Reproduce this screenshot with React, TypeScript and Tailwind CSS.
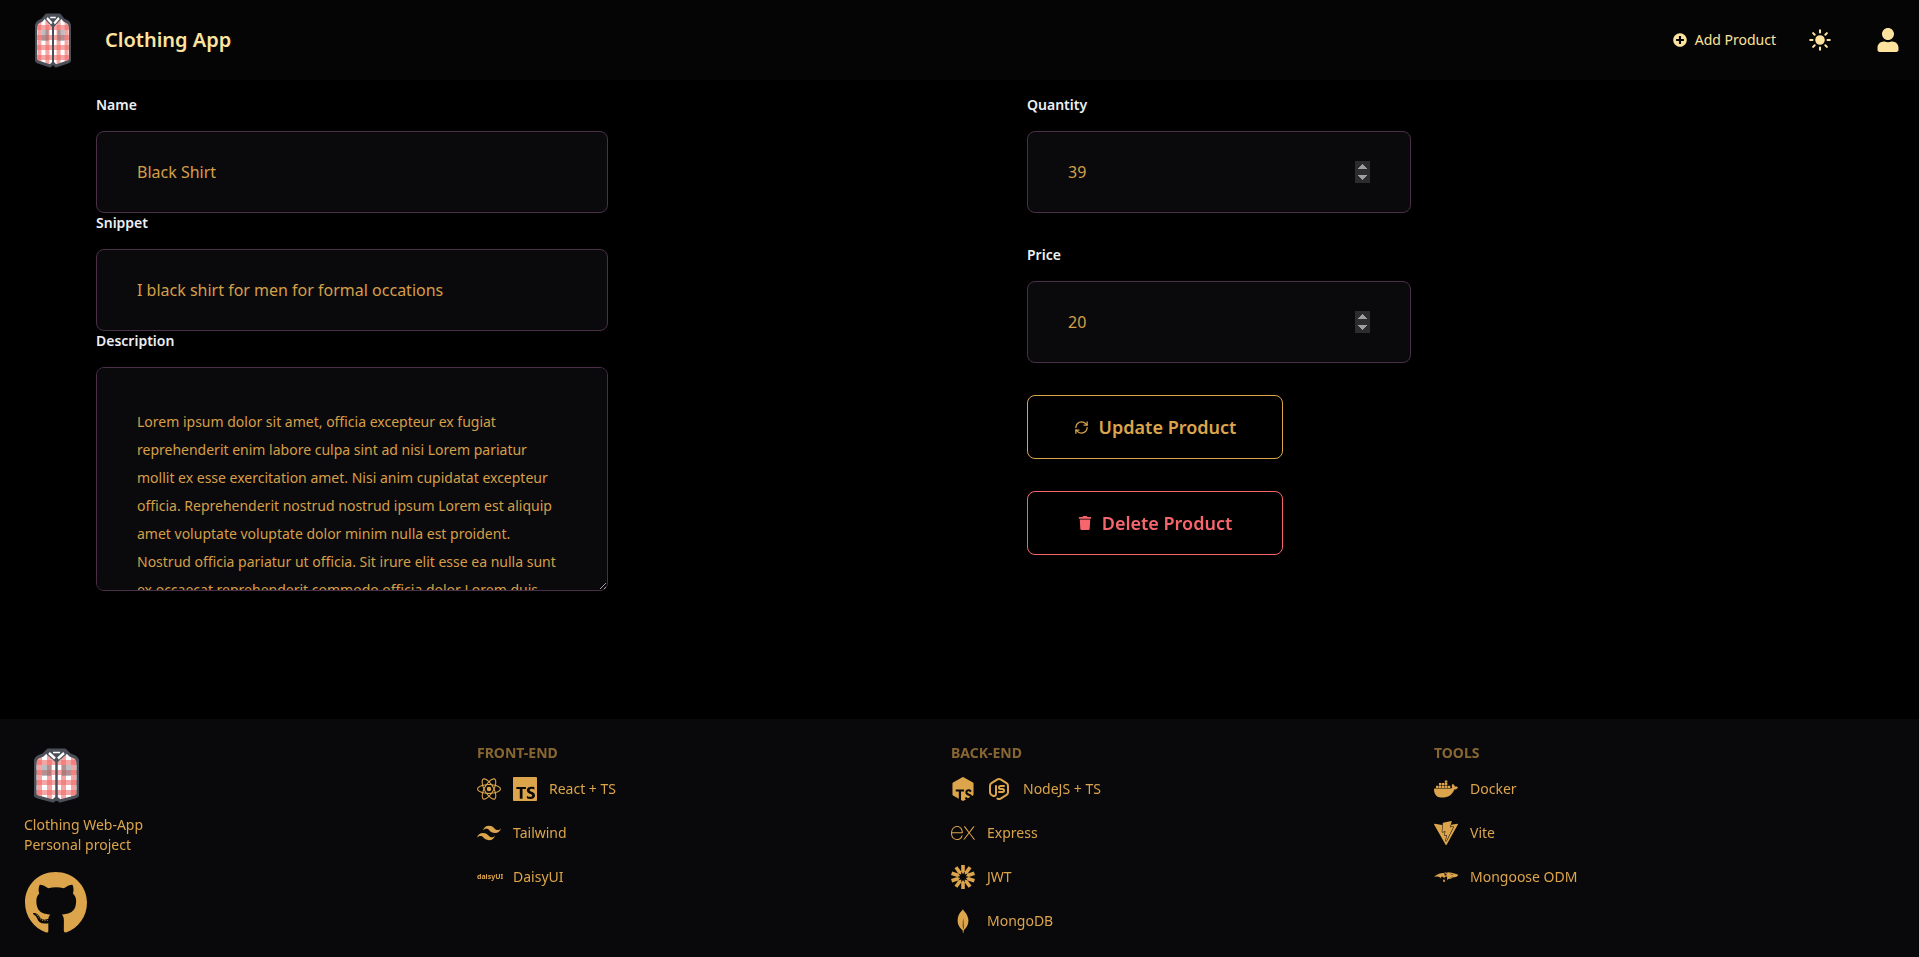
import type { ReactNode } from 'react';
import { FaGithub, FaPlusCircle, FaTrash, FaUser } from 'react-icons/fa';
import { IoSunny } from 'react-icons/io5';
import { LuRefreshCw } from 'react-icons/lu';
import { TbBrandNodejs } from 'react-icons/tb';
import {
  SiDocker,
  SiExpress,
  SiJsonwebtokens,
  SiMongodb,
  SiMongoose,
  SiReact,
  SiTailwindcss,
  SiTsnode,
  SiTypescript,
  SiVite,
} from 'react-icons/si';

const description =
  'Lorem ipsum dolor sit amet, officia excepteur ex fugiat reprehenderit enim labore culpa sint ad nisi Lorem pariatur mollit ex esse exercitation amet. Nisi anim cupidatat excepteur officia. Reprehenderit nostrud nostrud ipsum Lorem est aliquip amet voluptate voluptate dolor minim nulla est proident. Nostrud officia pariatur ut officia. Sit irure elit esse ea nulla sunt ex occaecat reprehenderit commodo officia dolor Lorem duis laboris cupidatat officia voluptate. Culpa proident adipisicing id nulla nisi laboris ex in Lorem sunt duis officia eiusmod.';

const shirtOutline = 'M14 2 L31 2 L36 7 L41 9 Q44 11 44 15 L44 46 Q44 48 41 49 L26 53 L22.5 50 L19 53 L4 49 Q1 48 1 46 L1 15 Q1 11 4 9 L9 7 Z';

function ShirtLogo({ className }: { className: string }) {
  return (
    <svg viewBox="0 0 45 55" preserveAspectRatio="none" className={className}>
      <defs>
        <clipPath id="shirt-body">
          <path d={shirtOutline} />
        </clipPath>
      </defs>
      <g clipPath="url(#shirt-body)">
        <rect width="45" height="55" fill="#ffffff" />
        {[3, 13, 27, 37].map((x) => (
          <rect key={x} x={x} y="0" width="5" height="55" fill="#ef6b68" fillOpacity="0.6" />
        ))}
        {[12, 22, 32, 42].map((y) => (
          <rect key={y} x="0" y={y} width="45" height="5" fill="#ef6b68" fillOpacity="0.6" />
        ))}
        <rect x="8" y="17" width="9" height="11" fill="#6b7078" fillOpacity="0.45" />
        <rect x="28" y="17" width="9" height="11" fill="#6b7078" fillOpacity="0.45" />
      </g>
      <path d={shirtOutline} fill="none" stroke="#4b5058" strokeWidth="3" strokeLinejoin="round" />
      <path d="M22.5 10 L22.5 50" stroke="#4b5058" strokeWidth="2.5" />
      <path d="M11 5 L22.5 15 L34 5 L30 2 L15 2 Z" fill="#4b5058" />
      <path d="M15 5 L21 10.5 M30 5 L24 10.5" stroke="#ffffff" strokeWidth="2.5" />
      <path d="M19 4.5 L26 4.5" stroke="#ffffff" strokeWidth="1.5" />
    </svg>
  );
}

function Field({ label, children, className = '' }: { label: string; children: ReactNode; className?: string }) {
  return (
    <div className={className}>
      <label className="mb-4 block text-sm leading-5 font-semibold text-[#eceff4]">{label}</label>
      {children}
    </div>
  );
}

const inputClass =
  'block h-[82px] w-full rounded-lg border border-[#4a2f48] bg-[#0a0a0d] px-10 text-base text-[#d69f48] outline-none [color-scheme:dark]';
const numberClass = inputClass + ' [&::-webkit-inner-spin-button]:opacity-100';

function FooterRow({ icons, label }: { icons: ReactNode; label: string }) {
  return (
    <div className="flex h-6 items-center gap-3">
      {icons}
      <span className="text-sm leading-5">{label}</span>
    </div>
  );
}

function FooterColumn({ title, children }: { title: string; children: ReactNode }) {
  return (
    <div>
      <h6 className="mb-[14px] text-sm leading-5 font-bold uppercase opacity-60">{title}</h6>
      <div className="flex flex-col gap-5">{children}</div>
    </div>
  );
}

export default function App() {
  return (
    <div className="flex min-h-screen flex-col bg-black font-['Noto_Sans',sans-serif]">
      <header className="flex h-20 items-center justify-between bg-[#050506] pr-[19px] pl-[35px] text-[#fde39d]">
        <div className="flex items-center gap-[34px]">
          <ShirtLogo className="h-[55px] w-9" />
          <span className="text-xl font-semibold">Clothing App</span>
        </div>
        <div className="flex items-center">
          <button className="flex items-center gap-2 text-sm">
            <FaPlusCircle className="h-[14px] w-[14px]" />
            Add Product
          </button>
          <IoSunny className="ml-8 h-6 w-6" />
          <FaUser className="ml-11 h-6 w-6" />
        </div>
      </header>

      <main className="grid flex-1 grid-cols-[931px_384px] pt-[15px] pl-24">
        <div className="flex w-[512px] flex-col">
          <Field label="Name">
            <input className={inputClass} defaultValue="Black Shirt" />
          </Field>
          <Field label="Snippet" className="mt-[0px]">
            <input className={inputClass} defaultValue="I black shirt for men for formal occations" />
          </Field>
          <Field label="Description">
            <textarea
              className="block h-[224px] w-full rounded-lg border border-[#4a2f48] bg-[#0a0a0d] p-10 text-sm leading-7 text-[#d69f48] outline-none [color-scheme:dark] [scrollbar-width:none]"
              defaultValue={description}
            />
          </Field>
        </div>

        <div className="flex flex-col">
          <Field label="Quantity">
            <input type="number" className={numberClass} defaultValue={39} />
          </Field>
          <Field label="Price" className="mt-8">
            <input type="number" className={numberClass} defaultValue={20} />
          </Field>
          <button className="mt-8 flex h-16 w-64 items-center justify-center gap-2.5 rounded-lg border border-[#dca54c] text-lg font-semibold text-[#dca54c]">
            <LuRefreshCw className="h-[15px] w-[15px]" />
            Update Product
          </button>
          <button className="mt-8 flex h-16 w-64 items-center justify-center gap-2.5 rounded-lg border border-[#f8666d] text-lg font-semibold text-[#f8666d]">
            <FaTrash className="h-[14px] w-[14px]" />
            Delete Product
          </button>
        </div>
      </main>

      <footer className="grid h-[238px] grid-cols-[453px_474px_483px_1fr] bg-[#09090b] pt-6 pl-6 text-[#dca54c]">
        <div>
          <div className="flex h-16 w-16 items-center justify-center">
            <ShirtLogo className="h-[55px] w-[45px]" />
          </div>
          <p className="mt-2 text-sm leading-5">
            Clothing Web-App
            <br />
            Personal project
          </p>
          <FaGithub className="mt-4 h-16 w-16" />
        </div>

        <FooterColumn title="Front-end">
          <FooterRow
            icons={
              <>
                <SiReact className="h-6 w-6" />
                <SiTypescript className="h-6 w-6" />
              </>
            }
            label="React + TS"
          />
          <FooterRow icons={<SiTailwindcss className="h-6 w-6" />} label="Tailwind" />
          <FooterRow icons={<span className="w-6 text-[7px] font-bold">daisyUI</span>} label="DaisyUI" />
        </FooterColumn>

        <FooterColumn title="Back-end">
          <FooterRow
            icons={
              <>
                <SiTsnode className="h-6 w-6" />
                <TbBrandNodejs className="h-6 w-6" />
              </>
            }
            label="NodeJS + TS"
          />
          <FooterRow icons={<SiExpress className="h-6 w-6" />} label="Express" />
          <FooterRow icons={<SiJsonwebtokens className="h-6 w-6" />} label="JWT" />
          <FooterRow icons={<SiMongodb className="h-6 w-6" />} label="MongoDB" />
        </FooterColumn>

        <FooterColumn title="Tools">
          <FooterRow icons={<SiDocker className="h-6 w-6" />} label="Docker" />
          <FooterRow icons={<SiVite className="h-6 w-6" />} label="Vite" />
          <FooterRow icons={<SiMongoose className="h-6 w-6" />} label="Mongoose ODM" />
        </FooterColumn>
      </footer>
    </div>
  );
}
